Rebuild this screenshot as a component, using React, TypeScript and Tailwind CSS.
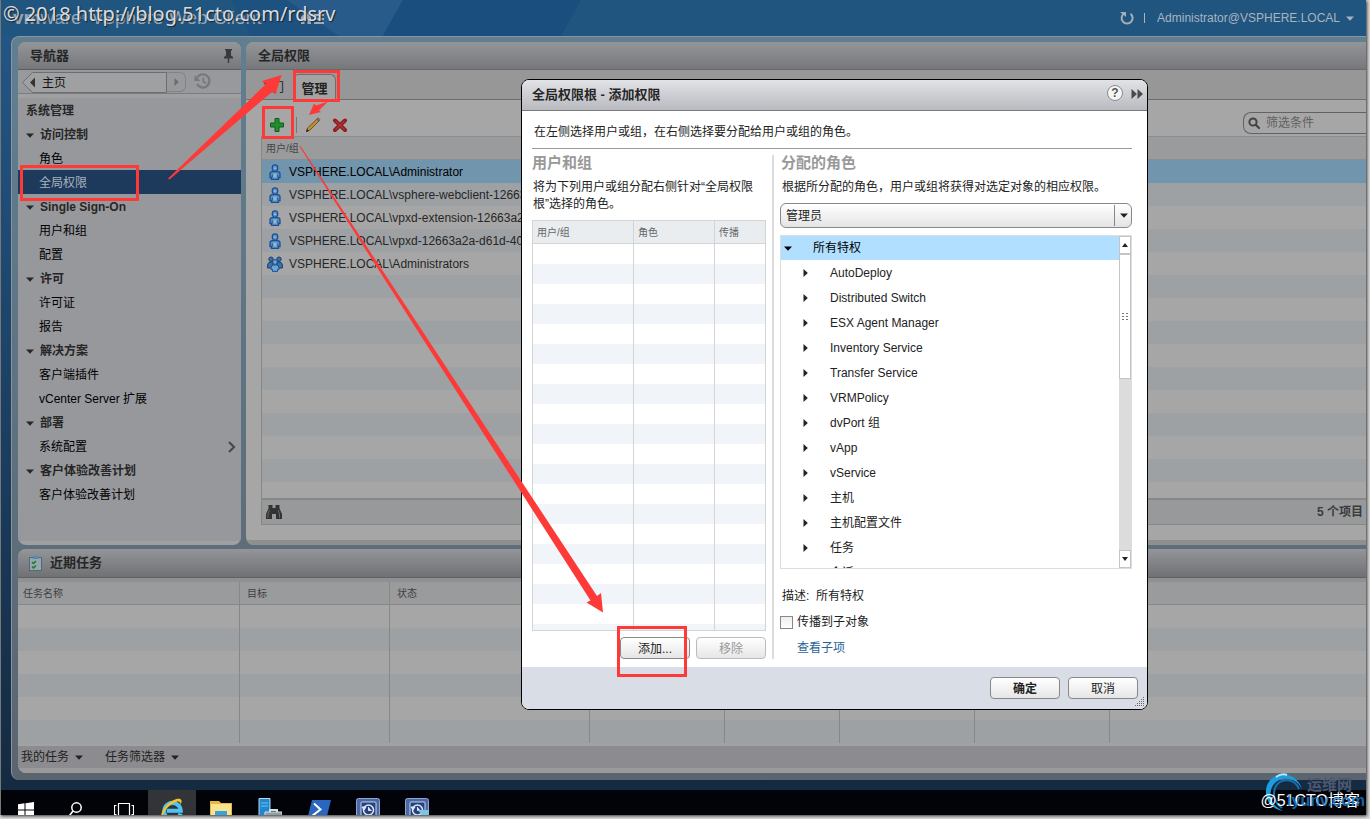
import React from "react";

type NavItem = { label: string; kind: "title" | "group" | "item"; active?: boolean; more?: boolean };

const NAV: NavItem[] = [
  { label: "系统管理", kind: "title" },
  { label: "访问控制", kind: "group" },
  { label: "角色", kind: "item" },
  { label: "全局权限", kind: "item", active: true },
  { label: "Single Sign-On", kind: "group" },
  { label: "用户和组", kind: "item" },
  { label: "配置", kind: "item" },
  { label: "许可", kind: "group" },
  { label: "许可证", kind: "item" },
  { label: "报告", kind: "item" },
  { label: "解决方案", kind: "group" },
  { label: "客户端插件", kind: "item" },
  { label: "vCenter Server 扩展", kind: "item" },
  { label: "部署", kind: "group" },
  { label: "系统配置", kind: "item", more: true },
  { label: "客户体验改善计划", kind: "group" },
  { label: "客户体验改善计划", kind: "item" },
];

const USERS = [
  "VSPHERE.LOCAL\\Administrator",
  "VSPHERE.LOCAL\\vsphere-webclient-12663a2a-d61d",
  "VSPHERE.LOCAL\\vpxd-extension-12663a2a-d61d-40",
  "VSPHERE.LOCAL\\vpxd-12663a2a-d61d-40",
  "VSPHERE.LOCAL\\Administrators",
];

const PRIVILEGES = [
  "AutoDeploy",
  "Distributed Switch",
  "ESX Agent Manager",
  "Inventory Service",
  "Transfer Service",
  "VRMPolicy",
  "dvPort 组",
  "vApp",
  "vService",
  "主机",
  "主机配置文件",
  "任务",
  "会话",
];

const range = (n: number) => Array.from({ length: n }, (_, i) => i);

function Down({ className = "" }: { className?: string }) {
  return (
    <svg width="8" height="5" viewBox="0 0 8 5" className={`shrink-0 ${className}`} aria-hidden="true">
      <path d="M0 0.5h8L4 4.8z" fill="currentColor" />
    </svg>
  );
}

function Right({ className = "" }: { className?: string }) {
  return (
    <svg width="5" height="8" viewBox="0 0 5 8" className={`shrink-0 ${className}`} aria-hidden="true">
      <path d="M0.5 0v8L4.8 4z" fill="currentColor" />
    </svg>
  );
}

function UserIcon() {
  return (
    <svg width="16" height="16" viewBox="0 0 16 16" aria-hidden="true">
      <g fill="#5f93bb" stroke="#1a4f9c" strokeWidth="1.3">
        <path d="M5.300 3.500Q5.300 .8 8 .8T10.700 3.500V5Q10 7.300 8 7.300T5.300 5z" />
        <path d="M3 10Q3 7.600 5.500 7.600H10.500Q13 7.600 13 10V13.500H11.500V15.400H4.500V13.500H3z" />
      </g>
      <path d="M5.300 10.500v3M10.700 10.500v3" stroke="#1a4f9c" strokeWidth=".8" />
      <path d="M7 3.500h2v1.500H7zM6.500 9.500h3v4h-3z" fill="#8fb8d4" />
    </svg>
  );
}

function GroupIcon() {
  return (
    <svg width="16" height="16" viewBox="0 0 16 16" aria-hidden="true">
      <g fill="#41719f" stroke="#173f78" strokeWidth="1">
        <circle cx="4" cy="3.200" r="2.200" />
        <circle cx="12" cy="3.200" r="2.200" />
        <path d="M.6 9Q1 6 4 6H6V12H.6zM15.400 9Q15 6 12 6H10V12H15.400z" />
      </g>
      <g fill="#6fa5cc" stroke="#1a4f9c" strokeWidth="1">
        <circle cx="8" cy="6" r="2.400" />
        <path d="M4 12Q4 9 6.500 9H9.500Q12 9 12 12V13.500H10.500V15.400H5.500V13.500H4z" />
      </g>
    </svg>
  );
}

function Navigator() {
  return (
    <aside className="flex w-[223px] shrink-0 flex-col overflow-hidden rounded-lg bg-[#a0a0a0]">
      <div className="flex h-7 items-center justify-between border-b border-[#5c5d60] bg-linear-to-b from-[#949599] to-[#77787b] pr-2 pl-3">
        <h2 className="text-[13px] font-bold text-[#262626]">导航器</h2>
        <svg width="9" height="14" viewBox="0 0 9 14" aria-hidden="true">
          <path d="M1 0h7v1.500H7v5l2 1.500v1.500H5.200V14H3.800V9.500H0V8l2-1.500v-5H1z" fill="#38393b" />
        </svg>
      </div>
      <div className="mb-1 flex h-6 items-center border-b border-[#7c7d81] bg-[#98999d] pl-1">
        <button className="relative flex h-5 w-[145px] items-center text-left text-xs text-[#111]">
          <svg width="145" height="21" viewBox="0 0 145 21" className="absolute inset-0" aria-hidden="true">
            <path d="M10.500 .5H144.500V20.500H10.500L.5 10.500z" fill="#9fa0a2" stroke="#6d6e71" />
            <path d="M13 5.500v10L8 10.500z" fill="#333" />
          </svg>
          <span className="relative pt-[3px] pl-5">主页</span>
        </button>
        <button aria-label="前进" className="flex h-5 w-[19px] items-center justify-center rounded-r-md border border-l-0 border-[#828387] text-[#6c6d70]">
          <Right />
        </button>
        <svg width="18" height="17" viewBox="0 0 18 17" className="ml-2" aria-hidden="true">
          <g fill="none" stroke="#77787c" strokeWidth="2.200">
            <path d="M3.200 4.500A6.600 6.600 0 1 1 3 11" />
            <path d="M9.300 4.500v4.300l3 1.500" strokeWidth="1.600" />
          </g>
          <path d="M.5 2v6h6z" fill="#77787c" />
        </svg>
      </div>
      <nav className="mb-1 flex-1 bg-[#97989c]">
        <ul>
          {NAV.map((n, i) => (
            <li key={i}>
              <a
                href="#"
                className={`flex h-6 items-center pt-[2px] text-xs ${n.kind === "item" ? "pl-[21px]" : "pl-2 font-bold"} ${
                  n.active ? "bg-[#1d3a5c] text-[#a9b2bd]" : n.kind === "item" ? "text-black" : "text-[#262626]"
                }`}
              >
                {n.kind === "group" && <Down className="mr-[6px]" />}
                <span>{n.label}</span>
                {n.more && (
                  <svg width="8" height="12" viewBox="0 0 8 12" className="mr-[5px] ml-auto" aria-hidden="true">
                    <path d="M1 1l5 5-5 5" fill="none" stroke="#48494b" strokeWidth="2.200" />
                  </svg>
                )}
              </a>
            </li>
          ))}
        </ul>
      </nav>
    </aside>
  );
}

function Permissions() {
  return (
    <section className="flex min-w-0 flex-1 flex-col overflow-hidden rounded-l-lg bg-[#a6a6a6]">
      <div className="flex h-7 items-center border-b border-[#68696c] bg-linear-to-b from-[#949599] to-[#77787b] pl-3">
        <h2 className="text-[13px] font-bold text-[#262626]">全局权限</h2>
      </div>
      <div className="flex h-[30px] items-end border-b border-[#6e6e6e] bg-[#979797] pl-[14px]">
        <button className="h-6 w-[33px] pt-[2px] text-left text-xs text-[#222]">入门</button>
        <button className="h-[25px] w-[43px] rounded-t-md border border-b-0 border-[#6e6e6e] bg-[#a3a3a3] pt-[3px] text-[13px] font-bold text-[#222]">管理</button>
      </div>
      <div className="flex h-9 items-center pt-[14px] pl-6">
        <button aria-label="添加权限">
          <svg width="14" height="14" viewBox="0 0 14 14">
            <path d="M5 .5h4V5h4.500v4H9v4.500H5V9H.5V5H5z" fill="#1f8f2b" stroke="#125c1a" />
          </svg>
        </button>
        <span className="ml-3 h-4 w-px bg-[#777]" />
        <button aria-label="编辑权限" className="ml-2">
          <svg width="16" height="16" viewBox="0 0 16 16">
            <path d="M1.500 14.500l1-3.500L12 2l2 2-9 9z" fill="#c18c2c" stroke="#5e431d" strokeWidth=".8" />
            <path d="M11.500 2.200l1.500-1.400 2.200 2L13.700 4.300z" fill="#9b6a70" stroke="#54464a" strokeWidth=".6" />
            <path d="M1 15l1-3 2 2z" fill="#222" />
          </svg>
        </button>
        <button aria-label="移除权限" className="ml-3">
          <svg width="14" height="14" viewBox="0 0 14 14">
            <path d="M2 2.500l10 9.500M12 2.500L2 12" stroke="#8f1c20" strokeWidth="4" strokeLinecap="round" />
            <path d="M2.500 3l9 8.500M11.500 3l-9 8.500" stroke="#a93436" strokeWidth="1.500" />
          </svg>
        </button>
        <label className="mb-1 ml-auto flex h-[22px] w-[123px] items-center rounded-l-lg border border-r-0 border-[#626262] pl-1">
          <svg width="12" height="12" viewBox="0 0 12 12" aria-hidden="true">
            <circle cx="5" cy="5" r="3.600" fill="none" stroke="#444" strokeWidth="2" />
            <path d="M7.800 7.800L11 11" stroke="#444" strokeWidth="2.200" strokeLinecap="round" />
          </svg>
          <input aria-label="筛选条件" placeholder="筛选条件" className="ml-[6px] w-[90px] bg-transparent text-xs outline-none placeholder:text-[#606060]" />
        </label>
      </div>
      <div className="ml-[15px] border-l border-[#858789]">
        <div className="h-[362px] overflow-hidden">
          <table className="w-full table-fixed border-separate border-spacing-0">
            <thead>
              <tr>
                <th className="h-6 border-t border-b border-[#8b8c8e] bg-[#9a9b9d] p-0 pl-1 text-left text-[10px] font-normal text-[#444]">用户/组</th>
              </tr>
            </thead>
            <tbody>
              {range(15).map((i) => (
                <tr key={i} className={i === 0 ? "bg-[#7195ad]" : i % 2 ? "bg-[#9da1a4]" : "bg-[#a6a6a6]"}>
                  <td className="h-[23px] p-0">
                    {USERS[i] && (
                      <span className={`flex items-center gap-[6px] pl-[5px] text-xs whitespace-nowrap ${i === 0 ? "text-black" : "text-[#262626]"}`}>
                        {i === 4 ? <GroupIcon /> : <UserIcon />}
                        {USERS[i]}
                      </span>
                    )}
                  </td>
                </tr>
              ))}
            </tbody>
          </table>
        </div>
        <div className="flex h-[27px] items-center justify-between border-t-2 border-b border-[#868789] bg-[#98999b] pr-[3px] pl-1">
          <svg width="16" height="14" viewBox="0 0 16 14" aria-hidden="true">
            <path d="M2.500 0h4v3h3V0h4v3.500L16 9v5h-6V9H6v5H0V9l2.500-5.500z" fill="#333" />
            <path d="M3.500 5L2 9v4M12 5l1.500 4v4" stroke="#666" fill="none" />
          </svg>
          <span className="text-xs font-bold text-[#3c3c3c]">5 个项目</span>
        </div>
      </div>
      <div className="min-h-[15px] flex-1" />
      <div className="h-[5px] bg-[#8f8f8d]" />
    </section>
  );
}

const TASK_HEADS = ["任务名称", "目标", "状态", "", "", "", "", ""];

function RecentTasks() {
  return (
    <section className="mt-1 flex flex-1 flex-col overflow-hidden rounded-l-lg bg-[#8f9094]">
      <div className="mb-1 flex h-[29px] items-center gap-2 border-b border-[#606163] bg-linear-to-b from-[#949599] to-[#707173] pl-[11px]">
        <svg width="13" height="16" viewBox="0 0 13 16" aria-hidden="true">
          <rect x=".5" y="2.500" width="12" height="13" fill="#98a5ab" stroke="#4d6b80" />
          <path d="M3 4Q4 3.500 4.500 1.800Q6.500-.8 8.500 1.800Q9 3.500 10 4z" fill="#4f8fae" />
          <path d="M3 7l1.500 1.500L7 6M3 11.500L4.500 13 7 10.500" fill="none" stroke="#187a2d" strokeWidth="1.500" />
        </svg>
        <h2 className="text-[13px] font-bold text-[#262626]">近期任务</h2>
      </div>
      <table className="w-full table-fixed border-separate border-spacing-0 bg-[#a6a6a6]">
        <colgroup>
          <col className="w-[222px]" />
          <col className="w-[150px]" />
          <col className="w-[200px]" />
          <col className="w-[135px]" />
          <col className="w-[115px]" />
          <col className="w-[135px]" />
          <col className="w-[135px]" />
          <col />
        </colgroup>
        <thead>
          <tr>
            {TASK_HEADS.map((h, i) => (
              <th key={i} className="h-[23px] border-b border-[#868789] bg-[#9a9b9d] p-0 text-left text-[10px] font-normal text-[#3f3f3f] not-last:border-r">
                <span className={i === 0 ? "pl-[5px]" : "pl-[7px]"}>{h}</span>
              </th>
            ))}
          </tr>
        </thead>
        <tbody>
          {range(6).map((r) => (
            <tr key={r} className={r % 2 ? "bg-[#9da1a4]" : "bg-[#a6a6a6]"}>
              {TASK_HEADS.map((_, c) => (
                <td key={c} className="h-[23px] border-[#868789] p-0 not-last:border-r" />
              ))}
            </tr>
          ))}
        </tbody>
      </table>
      <div className="h-[3px] bg-[#a2a2a2]" />
      <div className="flex flex-1 items-center gap-[22px] bg-[#8c8c90] pl-[3px] text-xs text-[#222]">
        <button className="flex items-center gap-[6px]">我的任务<Down /></button>
        <button className="flex items-center gap-[6px]">任务筛选器<Down /></button>
      </div>
      <div className="h-[5px] bg-[#9a9a9a]" />
    </section>
  );
}

const dialogButton = "h-[22px] w-[70px] rounded-sm border bg-linear-to-b from-white to-[#e6e6e6] pt-[2px] text-xs leading-none";

function ScrollArrow({ up }: { up?: boolean }) {
  return (
    <button aria-label={up ? "向上滚动" : "向下滚动"} className="flex h-[18px] w-full shrink-0 items-center justify-center border border-[#c4c4c4] bg-white text-[#222]">
      <svg width="6" height="4" viewBox="0 0 6 4" className={up ? "" : "rotate-180"} aria-hidden="true">
        <path d="M0 4h6L3 0z" fill="currentColor" />
      </svg>
    </button>
  );
}

function AddPermissionDialog() {
  return (
    <div role="dialog" aria-labelledby="dlg-title" className="absolute top-[79px] left-[521px] flex w-[627px] flex-col overflow-hidden rounded-lg border border-black bg-white text-[#222]">
      <div className="flex h-[31px] items-center border-b border-[#7b7b7e] bg-linear-to-b from-[#e2e3e7] to-[#b9babf] pr-1 pl-[10px]">
        <h2 id="dlg-title" className="text-[13px] font-bold text-[#262626]">全局权限根 - 添加权限</h2>
        <button aria-label="帮助" className="mr-2 mb-1 ml-auto flex size-4 items-center justify-center rounded-full border border-[#8b8b8b] bg-[#f5f5f5] text-xs leading-none font-bold text-[#555]">?</button>
        <svg width="12" height="10" viewBox="0 0 12 10" className="mb-[2px]" aria-hidden="true">
          <path d="M.5 0L6 5 .5 10zM6.500 0L12 5l-5.500 5z" fill="#4a4a4c" />
        </svg>
      </div>
      <div className="px-[10px] pr-[15px]">
        <p className="flex h-[38px] items-center border-b border-[#999] pt-1 pl-[2px] text-xs">在左侧选择用户或组，在右侧选择要分配给用户或组的角色。</p>
        <div className="flex pt-[6px] pb-2">
          <div className="flex w-[234px] flex-col">
            <h3 className="text-[15px] leading-4 font-bold text-[#999]">用户和组</h3>
            <p className="mt-2 pl-px text-xs leading-[17px]">
              将为下列用户或组分配右侧针对“全局权限根”选择的角色。
            </p>
            <div className="mt-[7px] h-[411px] overflow-hidden border border-[#d2d4d6]">
              <table className="w-full table-fixed border-separate border-spacing-0">
                <colgroup>
                  <col className="w-[101px]" />
                  <col className="w-[81px]" />
                  <col />
                </colgroup>
                <thead>
                  <tr>
                    {["用户/组", "角色", "传播"].map((h) => (
                      <th key={h} className="h-[23px] border-b border-[#d2d4d6] bg-[#e9edf0] p-0 pl-1 text-left text-[10px] font-normal text-[#666] not-last:border-r">{h}</th>
                    ))}
                  </tr>
                </thead>
                <tbody>
                  {range(20).map((r) => (
                    <tr key={r} className={r % 2 ? "bg-[#f1f5fa]" : "bg-white"}>
                      {range(3).map((c) => (
                        <td key={c} className="h-5 border-[#d2d4d6] p-0 not-last:border-r" />
                      ))}
                    </tr>
                  ))}
                </tbody>
              </table>
            </div>
            <div className="mt-[6px] flex justify-end gap-[6px]">
              <button className={`${dialogButton} border-[#888]`}>添加...</button>
              <button disabled className={`${dialogButton} border-[#bbb] text-[#999]`}>移除</button>
            </div>
          </div>
          <div className="mx-[6px] w-[2px] bg-[#ddd]" />
          <div className="flex min-w-0 flex-1 flex-col text-xs">
            <h3 className="pl-px text-[15px] leading-4 font-bold text-[#999]">分配的角色</h3>
            <p className="mt-2 pl-[2px] leading-[17px]">根据所分配的角色，用户或组将获得对选定对象的相应权限。</p>
            <div className="relative mt-[7px]">
              <select aria-label="分配的角色" className="h-[25px] w-full appearance-none rounded-md border border-[#888] bg-linear-to-b from-white to-[#e4e4e4] pl-[5px] text-xs">
                <option>管理员</option>
              </select>
              <span className="pointer-events-none absolute inset-y-[2px] right-0 flex w-[18px] items-center justify-center border-l border-[#888]">
                <Down />
              </span>
            </div>
            <div className="mt-[7px] flex h-[334px] border border-[#ddd]">
              <ul className="min-w-0 flex-1 overflow-hidden">
                <li className="flex h-6 items-center bg-[#b1dfff] pl-[3px] text-black">
                  <Down className="mr-[21px]" />
                  所有特权
                </li>
                {PRIVILEGES.map((p) => (
                  <li key={p} className="flex h-[25px] items-center pl-[22px]">
                    <Right className="mr-[22px]" />
                    {p}
                  </li>
                ))}
              </ul>
              <div className="flex w-3 flex-col bg-[#dcdcdc]">
                <ScrollArrow up />
                <div className="flex h-[125px] items-center justify-center border border-[#c4c4c4] bg-white">
                  <svg width="6" height="7" viewBox="0 0 6 7" aria-hidden="true">
                    <path d="M0 0h2v1H0zM4 0h2v1H4zM0 3h2v1H0zM4 3h2v1H4zM0 6h2v1H0zM4 6h2v1H4z" fill="#777" />
                  </svg>
                </div>
                <div className="flex-1" />
                <ScrollArrow />
              </div>
            </div>
            <p className="mt-[18px] pl-[2px] leading-[18px]">描述:&nbsp; 所有特权</p>
            <label className="mt-2 flex items-center gap-1 leading-[18px]">
              <input type="checkbox" className="size-[13px] appearance-none border border-[#888] bg-linear-to-b from-[#eee] to-white" />
              传播到子对象
            </label>
            <a href="#" className="mt-2 pl-[17px] leading-[18px] text-[#2a6496]">查看子项</a>
          </div>
        </div>
      </div>
      <div className="relative flex h-[42px] items-center justify-end gap-2 bg-[#d9dde5] pr-[9px]">
        <button className={`${dialogButton} border-[#888] font-bold`}>确定</button>
        <button className={`${dialogButton} border-[#888]`}>取消</button>
        <svg width="10" height="10" viewBox="0 0 10 10" className="absolute right-[2px] bottom-[2px]" aria-hidden="true">
          <path d="M8 0h1v1H8zM6 2h1v1H6zM8 2h1v1H8zM4 4h1v1H4zM6 4h1v1H6zM8 4h1v1H8zM2 6h1v1H2zM4 6h1v1H4zM6 6h1v1H6zM8 6h1v1H8zM0 8h1v1H0zM2 8h1v1H2zM4 8h1v1H4zM6 8h1v1H6zM8 8h1v1H8z" fill="#666" />
        </svg>
      </div>
    </div>
  );
}

function ClockApp({ arrow }: { arrow?: boolean }) {
  return (
    <svg width="24" height="24" viewBox="0 0 24 24" aria-hidden="true">
      <rect x=".5" y=".5" width="23" height="23" rx="2" fill="#4c68a6" stroke="#8fa3cf" />
      <rect x="5" y="4" width="15" height="18" rx="1" fill="#24427f" stroke="#c6d2ec" />
      <circle cx="12.500" cy="12" r="5" fill="none" stroke="#dfe7f7" strokeWidth="1.500" />
      <path d="M12.500 9v3.500h3M6 9l2 3 2-3z" stroke="#dfe7f7" fill="#dfe7f7" />
      {arrow && <path d="M24 12v8H12l4-4-3-4z" fill="#7cc4e8" />}
    </svg>
  );
}

function Taskbar() {
  return (
    <footer className="h-[25px] overflow-hidden bg-[#020308]">
      <div className="flex h-10 items-center">
        <button aria-label="开始" className="flex w-[49px] justify-center">
          <svg width="16" height="16" viewBox="0 0 16 16">
            <path d="M0 2.200l6.500-.9v6.200H0zM7.500 1.200L16 0v7.500H7.500zM0 8.500h6.500v6.200L0 13.800zM7.500 8.500H16V16l-8.500-1.200z" fill="#fff" />
          </svg>
        </button>
        <button aria-label="搜索" className="flex w-[49px] justify-center">
          <svg width="14" height="16" viewBox="0 0 14 16">
            <circle cx="8.500" cy="5.500" r="4.700" fill="none" stroke="#fff" strokeWidth="1.500" />
            <path d="M5 9L.8 14.500" stroke="#fff" strokeWidth="1.600" />
          </svg>
        </button>
        <button aria-label="任务视图" className="flex w-[49px] justify-center">
          <svg width="20" height="14" viewBox="0 0 20 14">
            <path d="M4.500 .5h11v13h-11zM2.500 2.500h-2v9h2M17.500 2.500h2v9h-2" fill="none" stroke="#fff" strokeWidth="1.200" />
          </svg>
        </button>
        <button aria-label="Internet Explorer" className="flex h-10 w-12 items-center justify-center bg-[#333438]">
          <svg width="24" height="24" viewBox="0 0 24 24">
            <path d="M20.500 15.500A8.300 8.300 0 1 1 20.800 12.800H7" fill="none" stroke="#4fc4f3" strokeWidth="4" />
            <path d="M2 20C-2 14 12-1 20 1c2.500.8 1.500 4 .5 5.500C20.500 3 18 2.500 13.500 5 8 8 3 14 2 20z" fill="#f5c32c" />
          </svg>
        </button>
        <button aria-label="文件资源管理器" className="flex w-[49px] justify-center">
          <svg width="22" height="20" viewBox="0 0 22 20">
            <path d="M0 1h9l2 2h11v17H0z" fill="#e7b73f" />
            <path d="M1 4h20v15H1z" fill="#fbe38d" />
            <path d="M5 11h12v9h-3v-4H8v4H5z" fill="#35a4dc" />
          </svg>
        </button>
        <button aria-label="服务器管理器" className="flex w-[49px] justify-center">
          <svg width="24" height="24" viewBox="0 0 24 24">
            <path d="M1 .5h11v23H1z" fill="#2088d0" stroke="#b5daf1" />
            <path d="M3 5h7M3 8h7" stroke="#77bce9" />
            <path d="M7 14h17v9H7z" fill="#8f9da8" stroke="#d8e0e6" />
            <path d="M12 14v-2h7v2" fill="none" stroke="#d8e0e6" strokeWidth="2" />
          </svg>
        </button>
        <button aria-label="PowerShell" className="flex w-[49px] justify-center">
          <svg width="24" height="20" viewBox="0 0 24 20">
            <path d="M5 0h19l-5 20H0z" fill="#2a66c0" />
            <path d="M7 3.500l6.500 6L5 16M12 16h6" fill="none" stroke="#fff" strokeWidth="2" />
          </svg>
        </button>
        <button aria-label="vSphere" className="flex w-[49px] justify-center"><ClockApp /></button>
        <button aria-label="vSphere Update" className="flex w-[49px] justify-center"><ClockApp arrow /></button>
      </div>
    </footer>
  );
}

function Annotations() {
  return (
    <svg width="700" height="700" viewBox="0 0 700 700" className="pointer-events-none absolute top-0 left-0" aria-hidden="true">
      <g fill="none" stroke="#fd3a38" strokeWidth="3">
        <rect x="21.500" y="166.500" width="116" height="33" />
        <rect x="294.500" y="71.500" width="44" height="29" />
        <rect x="263.500" y="107.500" width="29" height="30" />
        <rect x="618.500" y="627.500" width="67" height="48" />
      </g>
      <g fill="#fd3a38">
        <path d="M168 178.500L266 84l-4-3 19.500-6-6 19.500-3-3L169.500 179.500z" />
        <path d="M328 101.500l-9 9 2 1.500-12 3 5-11.500 2 2z" />
        <path d="M299.500 146.500L590.500 600.500l-4 2L603 612.500 601 593l-4 3L300.500 146z" />
      </g>
    </svg>
  );
}

export default function App() {
  return (
    <div className="relative min-h-screen overflow-x-hidden bg-[#d8d8d8] pr-1 pb-1 font-['Liberation_Sans','Noto_Sans_CJK_SC',sans-serif] [&_svg]:block">
      <div className="flex min-h-[calc(100vh-4px)] flex-col border-l border-[#777] bg-linear-to-b from-[#23588a] to-[#14293f] shadow-[1px_1px_3px_#333]">
        <header className="relative flex h-9 items-center overflow-hidden bg-[#20557f] pr-3 text-xs text-[#a9b4bf]">
          <svg width="760" height="36" viewBox="0 0 760 36" className="absolute top-0 left-0" aria-hidden="true">
            <path d="M230 0h172l-20 36H250z" fill="#1d5180" />
            <path d="M286 0h116l-20 36H338z" fill="#285b89" />
            <path d="M402 0h178l-20 36H382z" fill="#1a4e7e" />
          </svg>
          <h1 className="relative pl-3 text-[19px] text-[#98a6b4]"><b>vm</b>ware<sup className="text-[8px]">®</sup> vSphere Web Client</h1>
          <button aria-label="主页" className="relative ml-10">
            <svg width="24" height="13" viewBox="0 0 24 13">
              <path d="M0 5L5 0l5 5v7H6.500V7h-3v5H0zM13 2h10v2H13zM13 6h10v2H13zM13 10h10v2H13z" fill="#a3adb7" />
            </svg>
          </button>
          <button aria-label="刷新" className="ml-auto">
            <svg width="14" height="14" viewBox="0 0 14 14">
              <path d="M4 2.500A5.500 5.500 0 1 0 10.500 2.700" fill="none" stroke="#a5afb9" strokeWidth="2" />
              <path d="M0 1h6v5z" fill="#a5afb9" />
            </svg>
          </button>
          <span className="mr-3 ml-[10px] h-[10px] w-px bg-[#a9b4bf]" />
          <button className="flex items-center gap-[6px]">Administrator@VSPHERE.LOCAL<Down /></button>
        </header>
        <main className="mb-[10px] ml-[10px] flex flex-1 flex-col rounded-l-lg border-t border-l border-[#8a959d] bg-linear-to-b from-[#617f91] to-[#5b6570] pt-[5px] pb-[7px] pl-[6px]">
          <div className="flex gap-[5px]">
            <Navigator />
            <Permissions />
          </div>
          <RecentTasks />
        </main>
        <Taskbar />
      </div>
      <AddPermissionDialog />
      <Annotations />
      <p className="absolute top-0 left-[3px] font-['Noto_Sans'] text-[20px] leading-[27px] whitespace-nowrap text-[#d5dce3] [text-shadow:1px_1px_1px_#222]">© 2018 http://blog.51cto.com/rdsrv</p>
      <div className="absolute right-[5px] bottom-1 h-[47px] w-[105px]">
        <svg width="40" height="42" viewBox="0 0 40 42" className="absolute top-1 left-1" aria-hidden="true">
          <path d="M38 17C32-3 4-2 2 18c-1 11 6 19 17 21C9 34 5 27 7 18 11 4 30 2 38 17z" fill="#1a9ee0" />
          <path d="M35 17C30 5 15 6 11 16c-3 9 0 15 7 20" fill="none" stroke="#176ea9" strokeWidth="2" />
          <path d="M12 5q6-4 11-2" fill="none" stroke="#b7e6ff" strokeWidth="2" />
        </svg>
        <span className="absolute top-[6px] left-[47px] text-[15px] leading-[22px] font-bold whitespace-nowrap text-[#4d5870]">运维网</span>
        <span className="absolute right-[5px] bottom-1 text-base leading-[20px] whitespace-nowrap text-white">@51CTO博客</span>
        <span className="absolute right-0 bottom-1 text-base leading-[20px] font-bold text-[#1b7ed0]/80">iyunv.com</span>
      </div>
    </div>
  );
}
